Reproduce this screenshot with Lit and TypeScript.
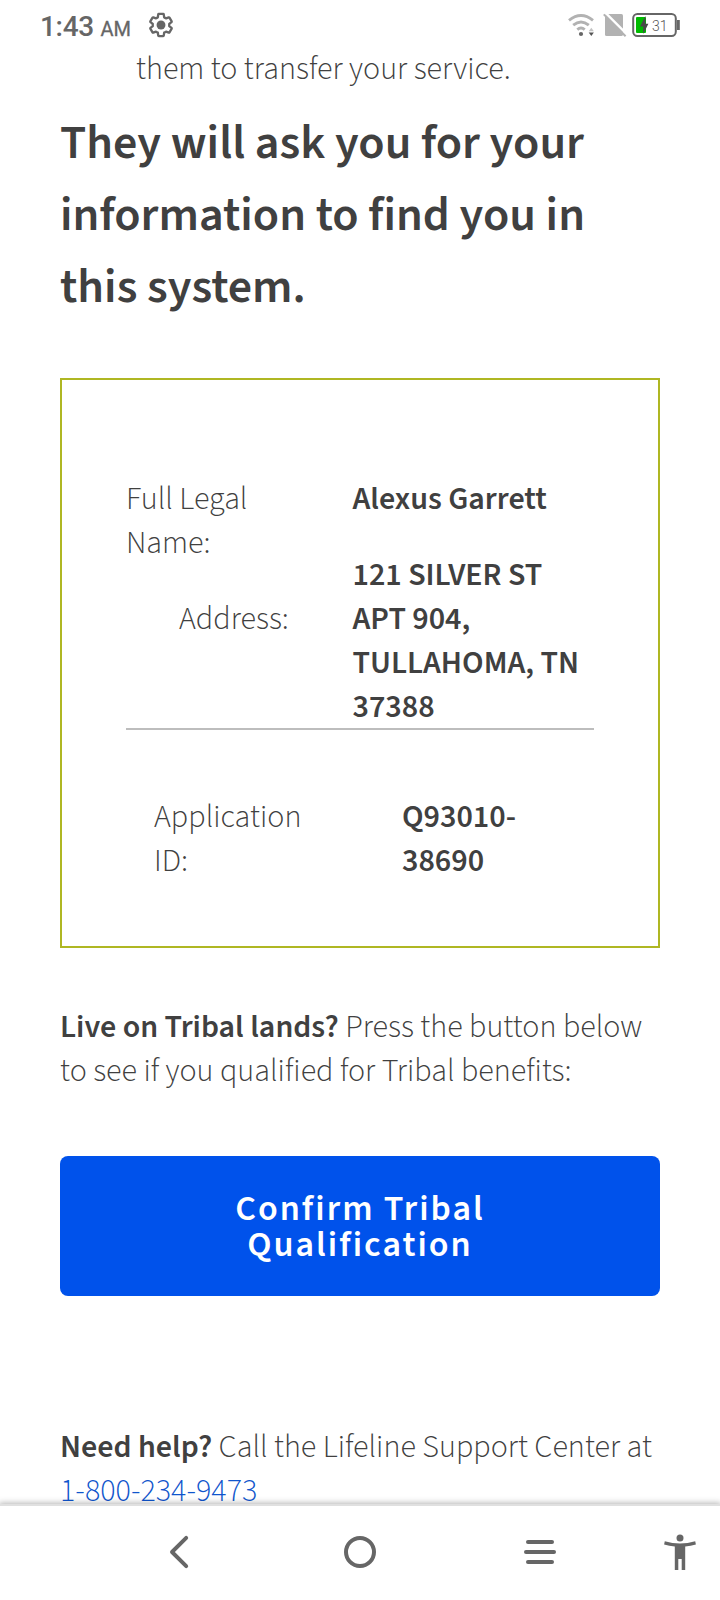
import { LitElement, html, css } from "lit";
import { customElement } from "lit/decorators.js";

@customElement("status-bar")
class StatusBar extends LitElement {
  static styles = css`
    :host { display: flex; box-sizing: border-box; height: 47px; padding: 0 40px 0 40px; color: #666; font-family: Roboto, sans-serif; }
    .time { width: 89px; font-size: 28px; font-weight: 500; line-height: 33px; padding-top: 10px; letter-spacing: -0.3px; white-space: nowrap; }
    .ampm { font-size: 20px; font-weight: 400; letter-spacing: -0.2px; -webkit-text-stroke: 0.3px #666; }
    .gear { margin: 13px 0 0 20px; width: 24px; height: 24px; overflow: visible; }
    .icons { display: flex; margin-left: auto; margin-top: 10px; }
    svg { display: block; }
    .lvl { font: 300 14px Roboto, sans-serif; fill: #555; }
  `;
  render() {
    return html`
      <div class="time">1:43 <span class="ampm">AM</span></div>
      <svg class="gear" viewBox="2 2 20 20">
        <path transform="translate(12 12) scale(.92) translate(-12 -12)" fill="none" stroke="#666" stroke-width="2.1" stroke-linejoin="round" d="M19.43 12.98c.04-.32.07-.64.07-.98s-.03-.66-.07-.98l2.11-1.65c.19-.15.24-.42.12-.64l-2-3.46c-.09-.16-.26-.25-.44-.25-.06 0-.12.01-.17.03l-2.49 1c-.52-.4-1.08-.73-1.69-.98l-.38-2.65C14.46 2.18 14.25 2 14 2h-4c-.25 0-.46.18-.49.42l-.38 2.65c-.61.25-1.17.59-1.69.98l-2.49-1c-.06-.02-.12-.03-.18-.03-.17 0-.34.09-.43.25l-2 3.46c-.13.22-.07.49.12.64l2.11 1.65c-.04.32-.07.65-.07.98s.03.66.07.98l-2.11 1.65c-.19.15-.24.42-.12.64l2 3.46c.09.16.26.25.44.25.06 0 .12-.01.17-.03l2.49-1c.52.4 1.08.73 1.69.98l.38 2.65c.03.24.24.42.49.42h4c.25 0 .46-.18.49-.42l.38-2.65c.61-.25 1.17-.59 1.69-.98l2.49 1c.06.02.12.03.18.03.17 0 .34-.09.43-.25l2-3.46c.12-.22.07-.49-.12-.64z"/>
        <circle cx="12" cy="12" r="3.7" fill="#666"/>
      </svg>
      <div class="icons">
        <svg width="112" height="30" viewBox="568 10 112 30">
          <g fill="none" stroke="#b2b2b2" stroke-width="2.9">
            <path d="M569 20.3Q581 10.7 593 20.3"/>
            <path d="M573.2 25.2Q581 18.8 588.8 25.2"/>
            <path d="M577.3 29.6Q581 26.4 584.7 29.6"/>
          </g>
          <circle cx="581" cy="34" r="2.1" fill="#666"/>
          <path d="M588.7 31.3 591.3 27.8 593.9 31.3Z" fill="#c4c4c4"/>
          <path d="M588.7 32.6H593.9L591.3 36.1Z" fill="#555"/>
          <rect x="605" y="14" width="18" height="22" rx="1.6" fill="#b2b2b2"/>
          <path d="M605 12.4 627 34.4" stroke="#fff" stroke-width="2.4" fill="none"/>
          <path d="M603.8 14.4 625.6 36.2" stroke="#b2b2b2" stroke-width="2" fill="none"/>
          <rect x="633.2" y="14" width="42.6" height="22" rx="4.2" fill="#fff" stroke="#666" stroke-width="2"/>
          <rect x="677" y="20" width="2.8" height="10" fill="#666"/>
          <rect x="636" y="17" width="10" height="16" rx="1" fill="#0b0"/>
          <path d="M645.4 16 640 26.6H643.2V34L648.4 23.8H645.4Z" fill="#484848"/>
          <text class="lvl" x="652" y="31">31</text>
        </svg>
      </div>`;
  }
}

@customElement("nav-bar")
class NavBar extends LitElement {
  static styles = css`
    :host { display: grid; grid-template-columns: 90px 180px 180px 180px 90px; place-items: center; box-sizing: border-box; height: 96px; border-top: 2px solid #e0e0e0; background: #fff; position: relative; box-shadow: 0 0 6px 1px rgba(0, 0, 0, 0.3); }
    svg { display: block; width: 40px; height: 40px; margin-bottom: 2px; }
    .back { grid-column: 2; }
    .access { margin-left: 10px; }
  `;
  render() {
    return html`
      <svg class="back" viewBox="0 0 40 40"><path d="M26.2 5.8 12 20 26.2 34.2" fill="none" stroke="#666" stroke-width="3.9" stroke-linecap="round" stroke-linejoin="round"/></svg>
      <svg viewBox="0 0 40 40"><circle cx="20" cy="20" r="14" fill="none" stroke="#666" stroke-width="4"/></svg>
      <svg viewBox="0 0 40 40"><g fill="#666"><rect x="6" y="8" width="28" height="4" rx="2"/><rect x="4" y="18" width="32" height="4" rx="2"/><rect x="6" y="28" width="28" height="4" rx="2"/></g></svg>
      <svg class="access" viewBox="0 0 40 40"><g fill="#666"><circle cx="20" cy="6" r="3.5"/><path d="M4.8 9.2Q20 13.6 35.2 9.2L35.9 12.4Q30.8 14 25.2 14.6V38H21.7V27H18.3V38H14.8V14.6Q9.2 14 4.1 12.4Z"/></g></svg>`;
  }
}

@customElement("app-root")
class AppRoot extends LitElement {
  static styles = css`
    :host { display: flex; flex-direction: column; height: 1600px; width: 720px; overflow: hidden; background: #fff; color: #404040; font: 300 32px/44px "Source Sans 3", "Source Sans Pro", "Noto Sans CJK SC", sans-serif; }
    main { flex: 1; min-height: 0; overflow: hidden; padding: 0 60px; }
    h2, p { margin: 0; }
    b { font-weight: 600; }
    .item { padding-left: 76px; }
    h2 { margin-top: 16px; font-size: 48px; line-height: 72px; font-weight: 600; }
    .card { box-sizing: border-box; height: 570px; margin-top: 55px; border: 2px solid #afb723; padding: 97px 64px 0; }
    .person { display: flex; height: 251px; border-bottom: 2px solid #bdbdbd; }
    .labels, .values { display: flex; flex-direction: column; gap: 32px; }
    .labels { width: 226.5px; }
    .address { padding-left: 53px; }
    .values { font-weight: 600; white-space: nowrap; }
    .application { display: flex; margin-top: 65px; padding-left: 28px; }
    .application .id { width: 248px; }
    .tribal { margin-top: 57px; white-space: nowrap; }
    .confirm { display: block; width: 100%; margin: 63px 0 0; padding: 35px 0 33px; border: 0; border-radius: 8px; background: #0052eb; color: #fff; font: 600 36px/36px "Source Sans 3", "Source Sans Pro", "Noto Sans CJK SC", sans-serif; letter-spacing: 2px; text-align: center; }
    .help { margin-top: 129px; white-space: nowrap; }
    .phone { color: #0f55cc; text-decoration: none; }
  `;
  render() {
    return html`
      <status-bar></status-bar>
      <main>
        <p class="item">them to transfer your service.</p>
        <h2>They will ask you for your<br>information to find you in<br>this system.</h2>
        <section class="card">
          <div class="person">
            <div class="labels"><div>Full Legal<br>Name:</div><div class="address">Address:</div></div>
            <div class="values"><div>Alexus Garrett</div><div>121 SILVER ST<br>APT 904,<br>TULLAHOMA, TN<br>37388</div></div>
          </div>
          <div class="application">
            <div class="id">Application<br>ID:</div><b>Q93010-<br>38690</b>
          </div>
        </section>
        <p class="tribal"><b>Live on Tribal lands?</b> Press the button below<br>to see if you qualified for Tribal benefits:</p>
        <button class="confirm">Confirm Tribal<br>Qualification</button>
        <p class="help"><b>Need help?</b> Call the Lifeline Support Center at<br><a class="phone" href="tel:1-800-234-9473">1-800-234-9473</a></p>
      </main>
      <nav-bar></nav-bar>`;
  }
}
